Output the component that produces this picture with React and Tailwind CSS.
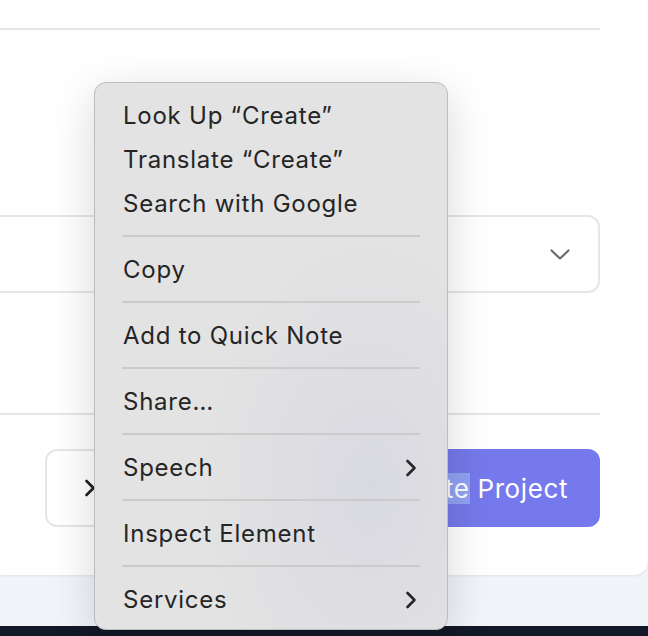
const MENU_GROUPS = [
  [{ label: 'Look Up “Create”' }, { label: 'Translate “Create”' }, { label: 'Search with Google' }],
  [{ label: 'Copy' }],
  [{ label: 'Add to Quick Note' }],
  [{ label: 'Share…' }],
  [{ label: 'Speech', submenu: true }],
  [{ label: 'Inspect Element' }],
  [{ label: 'Services', submenu: true }],
];

function RightChevron({ className = '' }) {
  return (
    <svg width="12" height="18" viewBox="0 0 12 18" fill="none" className={className}>
      <polyline
        points="2.5,2 9.5,9 2.5,16"
        stroke="currentColor"
        strokeWidth="2.6"
        strokeLinecap="round"
        strokeLinejoin="round"
      />
    </svg>
  );
}

function ContextMenu() {
  return (
    <div className="absolute left-[94px] top-[82px] w-[354px] rounded-[12px] border border-[#bdbdbd] bg-[#e3e3e3] bg-[radial-gradient(ellipse_at_78%_74%,#d9dae1_0%,#e3e3e3_45%)] pt-[10px] pb-[8px] shadow-[0_12px_45px_rgba(0,0,0,0.16)] text-[#252525]">
      {MENU_GROUPS.map((group, gi) => (
        <div key={gi}>
          {gi > 0 && (
            <div className="h-[22px] flex items-center px-[27px]">
              <div className="h-[2px] w-full bg-[#cbcbcb]" />
            </div>
          )}
          {group.map((item) => (
            <div
              key={item.label}
              className="h-[44px] flex items-center justify-between pl-[28px] pr-[30px] text-[24px] tracking-[0.75px] pt-[1px]"
            >
              <span>{item.label}</span>
              {item.submenu && <RightChevron className="text-[#262626]" />}
            </div>
          ))}
        </div>
      ))}
    </div>
  );
}

export default function App() {
  return (
    <div className="relative min-h-[636px] flex flex-col bg-[#f1f4f9] font-['Inter','Liberation_Sans',sans-serif] overflow-hidden">
      <div className="h-[575px] bg-white rounded-br-[14px] shadow-[0_1px_3px_rgba(0,0,0,0.08)] pr-12 flex flex-col">
        <div className="h-[30px] border-b-2 border-[#e6e6e6]" />

        <div className="mt-[185px] -ml-4 h-[78px] rounded-xl border-2 border-[#e6e6e6] flex items-center justify-end pr-[28px]">
          <svg width="20" height="11" viewBox="0 0 20 11" fill="none">
            <polyline points="1.5,1.5 10,9.5 18.5,1.5" stroke="#6b6b6b" strokeWidth="2.2" strokeLinecap="round" strokeLinejoin="round" />
          </svg>
        </div>

        <div className="mt-[120px] border-t-2 border-[#e6e6e6]" />

        <div className="mt-[34px] flex justify-end gap-6 h-[78px]">
          <button className="w-[301px] rounded-xl border-2 border-[#e6e6e6] bg-white flex items-center pl-[37px] text-[#1f1f1f]">
            <RightChevron />
          </button>
          <button className="w-[230px] rounded-xl bg-[#7579eb] text-white text-[26px] tracking-[0.6px] flex items-center justify-end pr-[32px]">
            <span className="whitespace-nowrap">
              Crea<span className="bg-[#8fa2f2]">te</span> Project
            </span>
          </button>
        </div>
      </div>

      <div className="mt-auto h-[10px] bg-[#111827]" />

      <ContextMenu />
    </div>
  );
}
